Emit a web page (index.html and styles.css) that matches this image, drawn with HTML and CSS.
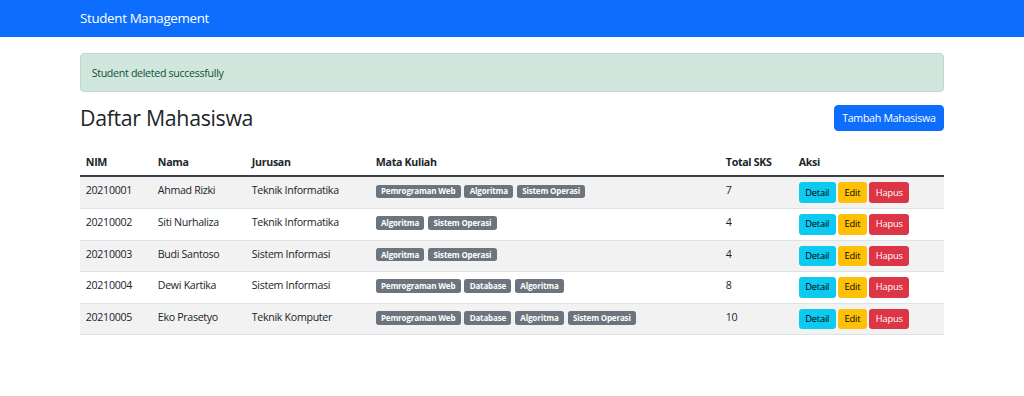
FILE: index.html
```html
<!DOCTYPE html>
<html lang="id">
<head>
<meta charset="utf-8">
<title>Student Management</title>
<link rel="stylesheet" href="styles.css">
</head>
<body>
<nav class="navbar">
  <div class="container">
    <span class="brand">Student Management</span>
  </div>
</nav>
<main class="container main">
  <div class="alert">Student deleted successfully</div>
  <div class="page-head">
    <h2 class="title">Daftar Mahasiswa</h2>
    <button class="btn btn-primary">Tambah Mahasiswa</button>
  </div>
  <table class="table">
    <colgroup>
      <col class="c-nim"><col class="c-nama"><col class="c-jur"><col class="c-mk"><col class="c-sks"><col class="c-aksi">
    </colgroup>
    <thead>
      <tr><th>NIM</th><th>Nama</th><th>Jurusan</th><th>Mata Kuliah</th><th>Total SKS</th><th>Aksi</th></tr>
    </thead>
    <tbody>
      <tr class="odd">
        <td>20210001</td><td>Ahmad Rizki</td><td>Teknik Informatika</td>
        <td><span class="badge">Pemrograman Web</span> <span class="badge">Algoritma</span> <span class="badge">Sistem Operasi</span></td>
        <td>7</td>
        <td><div class="actions"><button class="btn-sm info">Detail</button><button class="btn-sm warn">Edit</button><button class="btn-sm danger">Hapus</button></div></td>
      </tr>
      <tr>
        <td>20210002</td><td>Siti Nurhaliza</td><td>Teknik Informatika</td>
        <td><span class="badge">Algoritma</span> <span class="badge">Sistem Operasi</span></td>
        <td>4</td>
        <td><div class="actions"><button class="btn-sm info">Detail</button><button class="btn-sm warn">Edit</button><button class="btn-sm danger">Hapus</button></div></td>
      </tr>
      <tr class="odd">
        <td>20210003</td><td>Budi Santoso</td><td>Sistem Informasi</td>
        <td><span class="badge">Algoritma</span> <span class="badge">Sistem Operasi</span></td>
        <td>4</td>
        <td><div class="actions"><button class="btn-sm info">Detail</button><button class="btn-sm warn">Edit</button><button class="btn-sm danger">Hapus</button></div></td>
      </tr>
      <tr>
        <td>20210004</td><td>Dewi Kartika</td><td>Sistem Informasi</td>
        <td><span class="badge">Pemrograman Web</span> <span class="badge">Database</span> <span class="badge">Algoritma</span></td>
        <td>8</td>
        <td><div class="actions"><button class="btn-sm info">Detail</button><button class="btn-sm warn">Edit</button><button class="btn-sm danger">Hapus</button></div></td>
      </tr>
      <tr class="odd">
        <td>20210005</td><td>Eko Prasetyo</td><td>Teknik Komputer</td>
        <td><span class="badge">Pemrograman Web</span> <span class="badge">Database</span> <span class="badge">Algoritma</span> <span class="badge">Sistem Operasi</span></td>
        <td>10</td>
        <td><div class="actions"><button class="btn-sm info">Detail</button><button class="btn-sm warn">Edit</button><button class="btn-sm danger">Hapus</button></div></td>
      </tr>
    </tbody>
  </table>
</main>
</body>
</html>
```
FILE: styles.css
```css
* { box-sizing: border-box; }
html { font-size: 10.667px; }
body {
  margin: 0;
  font-family: "Open Sans", "Noto Sans", sans-serif;
  font-size: 1rem;
  line-height: 1.5;
  letter-spacing: -0.03em;
  color: #212529;
  background: #fff;
}
.container {
  max-width: 864px;
  margin: 0 auto;
}
.navbar {
  background: #0d6efd;
  height: 37px;
  display: flex;
  align-items: center;
}
.navbar .container { width: 100%; }
.brand {
  color: #fff;
  font-size: 1.25rem;
  line-height: 1.5;
}
.main { padding-top: 16px; }
.alert {
  padding: 10.667px 10.667px;
  line-height: 16px;
  background: #d1e7dd;
  border: 1px solid #badbcc;
  border-radius: 4px;
  color: #0f5132;
  margin-bottom: 13px;
}
.page-head {
  display: flex;
  justify-content: space-between;
  align-items: center;
  margin-bottom: 18.5px;
}
.title {
  margin: 0;
  font-size: 2rem;
  font-weight: 500;
  line-height: 1.2;
}
.btn {
  font-family: inherit;
  font-size: 1rem;
  letter-spacing: inherit;
  line-height: 16px;
  padding: 3.67px 7.5px;
  border-radius: 4px;
  border: 1px solid transparent;
  cursor: pointer;
}
.btn-primary { background: #0d6efd; color: #fff; border-color: #0d6efd; }
.table {
  width: 100%;
  border-collapse: collapse;
  table-layout: fixed;
}
.c-nim { width: 72px; }
.c-nama { width: 94px; }
.c-jur { width: 124px; }
.c-mk { width: 350px; }
.c-sks { width: 73px; }
.c-aksi { width: 151px; }
.table th, .table td {
  text-align: left;
  padding: 5px 5.8px;
  line-height: 16px;
  vertical-align: top;
  white-space: nowrap;
}
.table th {
  font-weight: 700;
  border-bottom: 2px solid #3d4146;
}
.table td { border-bottom: 1px solid #dee2e6; }
.table tr.odd td { background: #f2f2f2; }
.badge {
  display: inline-block;
  background: #6c757d;
  color: #fff;
  font-size: 8px;
  font-weight: 700;
  letter-spacing: -0.02em;
  line-height: 1;
  padding: 2.8px 5.2px;
  border-radius: 2.67px;
  margin-right: 1.5px;
}
.actions {
  display: flex;
  gap: 2.67px;
}
.btn-sm {
  font-family: inherit;
  font-size: 9.333px;
  letter-spacing: -0.02em;
  line-height: 14px;
  padding: 2.3px 5.33px;
  border: 1px solid transparent;
  border-radius: 2.67px;
  cursor: pointer;
}
.info { background: #0dcaf0; border-color: #0dcaf0; color: #000; }
.warn { background: #ffc107; border-color: #ffc107; color: #000; }
.danger { background: #dc3545; border-color: #dc3545; color: #fff; }
```
